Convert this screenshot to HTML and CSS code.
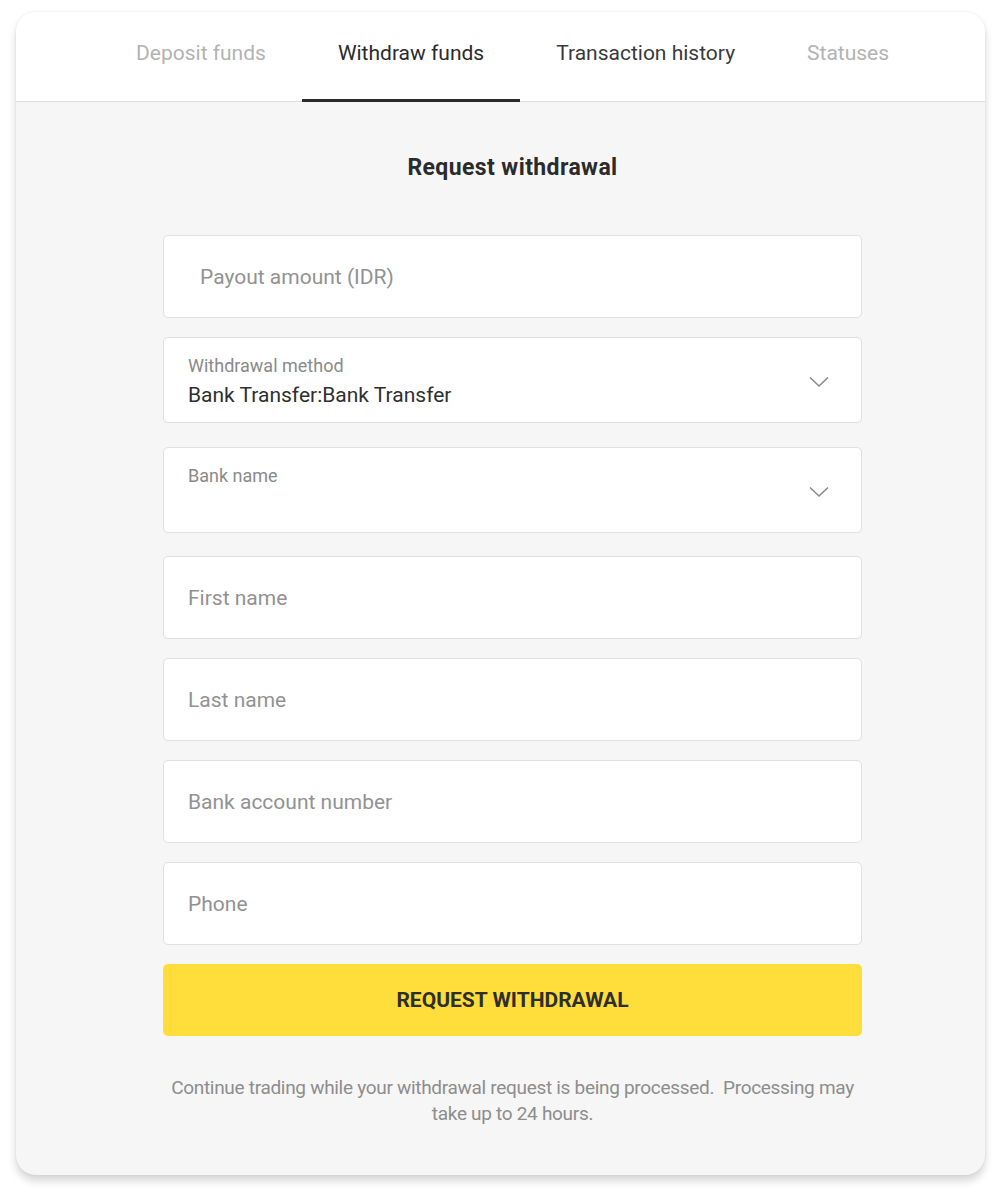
FILE: index.html
```html
<!DOCTYPE html>
<html>
<head>
<meta charset="utf-8">
<link rel="stylesheet" href="styles.css">
</head>
<body>
<div class="card">
  <nav class="tabs">
    <div class="tab muted">Deposit funds</div>
    <div class="tab active">Withdraw funds</div>
    <div class="tab">Transaction history</div>
    <div class="tab muted">Statuses</div>
  </nav>
  <main class="content">
    <h1 class="title">Request withdrawal</h1>
    <form class="form">
      <div class="field field-amount g19"><span class="placeholder">Payout amount (IDR)</span></div>
      <div class="field field-select g25">
        <div class="select-text">
          <span class="label">Withdrawal method</span>
          <span class="value">Bank Transfer:Bank Transfer</span>
        </div>
        <svg class="chevron" width="20" height="12" viewBox="0 0 20 12"><path d="M1 1.5 L10 10 L19 1.5" fill="none" stroke="#8a8a8a" stroke-width="1.6"/></svg>
      </div>
      <div class="field field-select g23">
        <div class="select-text">
          <span class="label">Bank name</span>
          <span class="value">&nbsp;</span>
        </div>
        <svg class="chevron" width="20" height="12" viewBox="0 0 20 12"><path d="M1 1.5 L10 10 L19 1.5" fill="none" stroke="#8a8a8a" stroke-width="1.6"/></svg>
      </div>
      <div class="field g19"><span class="placeholder">First name</span></div>
      <div class="field g19"><span class="placeholder">Last name</span></div>
      <div class="field g19"><span class="placeholder">Bank account number</span></div>
      <div class="field g19"><span class="placeholder">Phone</span></div>
      <button type="button" class="submit">REQUEST WITHDRAWAL</button>
    </form>
    <p class="note">Continue trading while your withdrawal request is being processed.&nbsp; Processing may take up to 24 hours.</p>
  </main>
</div>
</body>
</html>
```

FILE: styles.css
```css
* { box-sizing: border-box; }
html, body { margin: 0; background: #ffffff; }
body {
  padding: 12px 20px 25px 16px;
  font-family: Roboto, "Liberation Sans", Arial, sans-serif;
}
.card {
  width: 969px;
  height: 1163px;
  background: #f6f6f6;
  border-radius: 20px;
  overflow: hidden;
  box-shadow: 0 6px 8px rgba(0,0,0,0.16), 0 0 3px rgba(0,0,0,0.08);
}
.tabs {
  height: 90px;
  background: #ffffff;
  border-bottom: 1px solid #dedede;
  display: flex;
  justify-content: flex-start;
  padding-left: 84px;
}
.tab {
  padding: 0 36px;
  font-size: 21px;
  color: #3a3a3a;
  line-height: 1;
  padding-top: 31px;
  height: 90px;
  border-bottom: 3px solid transparent;
  margin-bottom: -1px;
}
.tab.muted { color: #b3b3b3; }
.tab.active { border-bottom-color: #2b2b2b; color: #2b2b2b; }
.content {
  display: flex;
  flex-direction: column;
  align-items: center;
  padding-left: 24px;
}
.title {
  margin: 52px 0 0;
  font-size: 23px;
  font-weight: 700;
  color: #2b2b2b;
  line-height: 28px;
  letter-spacing: 0.4px;
}
.form {
  width: 699px;
  margin-top: 53px;
  display: flex;
  flex-direction: column;
}
.field {
  background: #ffffff;
  border: 1px solid #e0e0e0;
  border-radius: 5px;
  height: 83px;
  display: flex;
  align-items: center;
  padding: 0 24px;
}
.g19 { margin-bottom: 19px; }
.g25 { margin-bottom: 24px; }
.g23 { margin-bottom: 23px; }
.field-amount { padding-left: 36px; }
.field-select { height: 86px; justify-content: space-between; align-items: flex-start; padding-top: 18px; padding-right: 32px; }
.placeholder { font-size: 21px; color: #929292; }
.select-text { display: flex; flex-direction: column; }
.label { font-size: 18px; color: #8a8a8a; line-height: 20px; }
.value { font-size: 21px; color: #2f2f2f; line-height: 24px; margin-top: 7px; }
.chevron { margin-top: 20px; }
.submit {
  height: 72px;
  border: none;
  border-radius: 5px;
  background: #ffdd3a;
  font-family: Roboto, "Liberation Sans", Arial, sans-serif;
  font-size: 21px;
  font-weight: 700;
  color: #2e2e2e;
  letter-spacing: 0;
}
.note {
  width: 690px;
  margin: 39px 0 0;
  text-align: center;
  font-size: 19px;
  line-height: 26px;
  color: #8d8d8d;
  letter-spacing: -0.3px;
}
```
